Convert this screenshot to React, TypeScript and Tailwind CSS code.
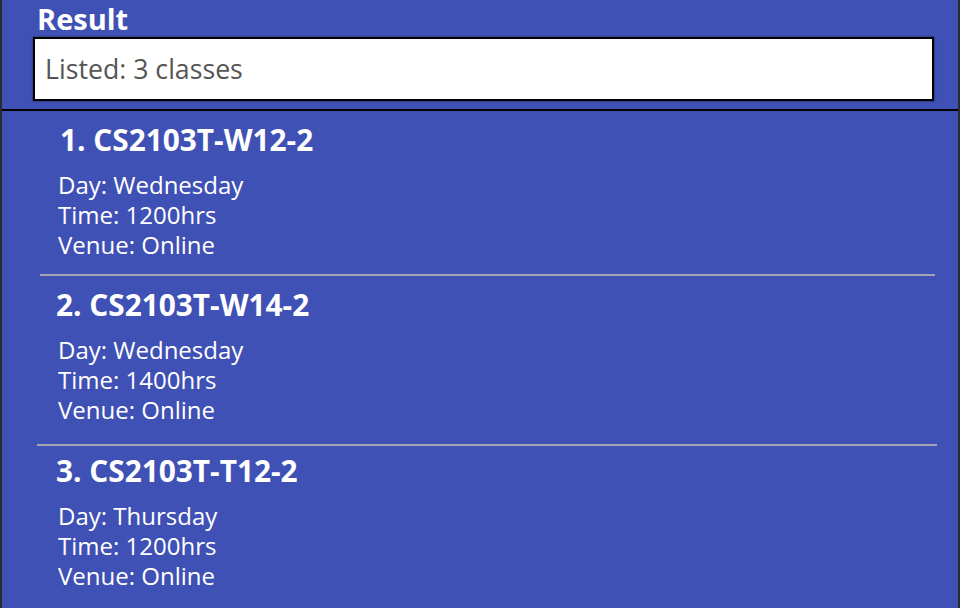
const CLASSES = [
  { code: 'CS2103T-W12-2', day: 'Wednesday', time: '1200hrs', venue: 'Online', cell: 'pt-[14px]', title: 'pl-[58px]', line: 'mt-[14px] ml-[38px] mr-[23px]' },
  { code: 'CS2103T-W14-2', day: 'Wednesday', time: '1400hrs', venue: 'Online', cell: 'pt-[14px]', title: 'pl-[54px]', line: 'mt-[19px] ml-[35px] mr-[21px]' },
  { code: 'CS2103T-T12-2', day: 'Thursday', time: '1200hrs', venue: 'Online', cell: 'pt-[10px]', title: 'pl-[54px]', line: '' },
]

export default function App() {
  return (
    <div
      className="h-[608px] w-[962px] overflow-hidden bg-white"
      style={{ fontFamily: '"Open Sans", Lato, sans-serif' }}
    >
      <div className="h-full w-[960px] border-l-2 border-r-2 border-[#2b2b2b] bg-[#3f51b5] text-white">
        {/* Result panel */}
        <div className="border-b-2 border-black pb-[8px]">
          <div className="pl-[35px] pt-[2px] text-[29px] font-bold leading-[33px]">Result</div>
          <div className="ml-[31px] mr-[24px] mt-[2px] flex h-[64px] items-center border-2 border-black bg-white pl-[10px] shadow-[0_0_2px_rgba(0,0,0,0.6)]">
            <span className="text-[26.7px] text-[#555555]">Listed: 3 classes</span>
          </div>
        </div>

        {/* Class list */}
        <div>
          {CLASSES.map((c, i) => (
            <div key={c.code}>
              <div className={c.cell}>
                <div className={`text-[29.8px] font-bold leading-[30px] ${c.title}`}>
                  {i + 1}. {c.code}
                </div>
                <div className="mt-[15px] pl-[56px] text-[24px] leading-[30px]">
                  <div>Day: {c.day}</div>
                  <div>Time: {c.time}</div>
                  <div>Venue: {c.venue}</div>
                </div>
              </div>
              {c.line && <div className={`h-[2px] bg-[#a3a3b4] ${c.line}`} />}
            </div>
          ))}
        </div>
      </div>
    </div>
  )
}
